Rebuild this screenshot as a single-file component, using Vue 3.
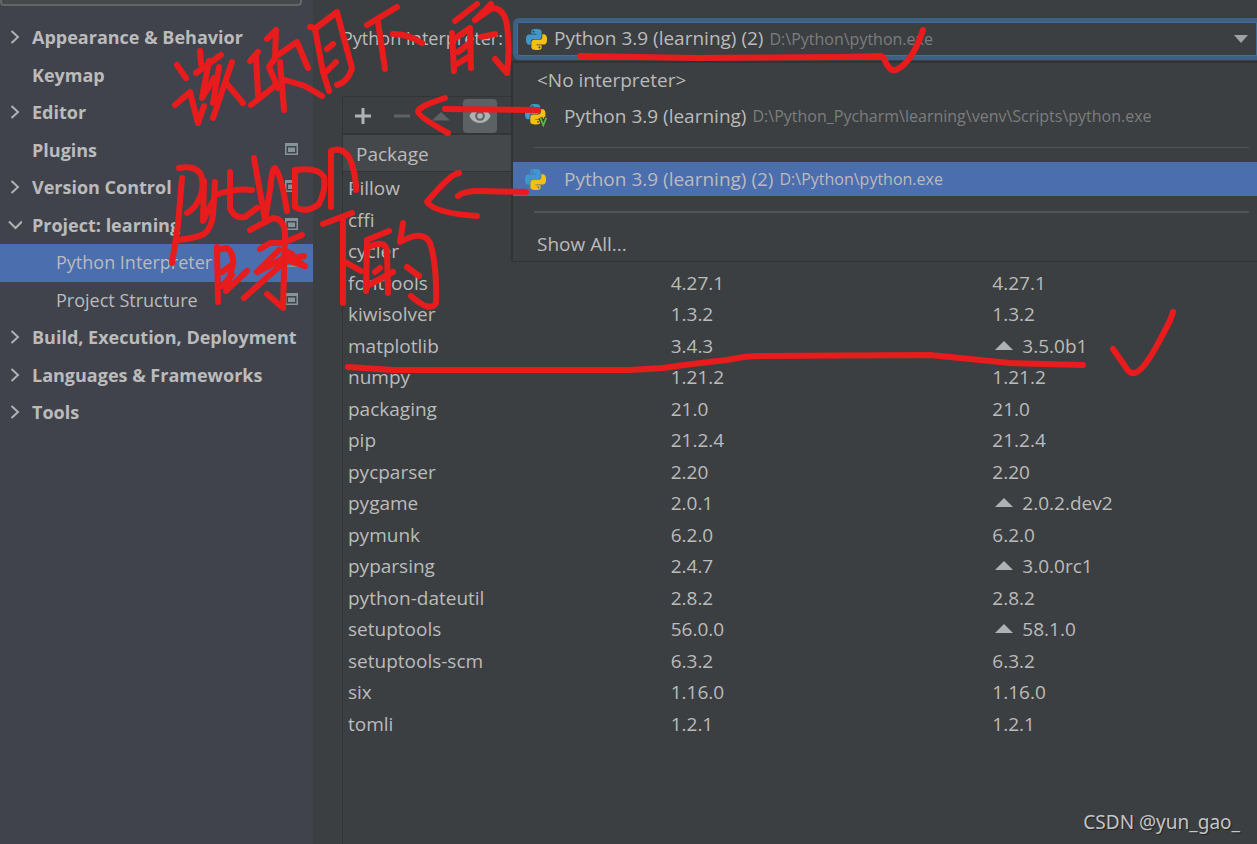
<script setup>
import { ref } from 'vue'

const query = ref('')
const interpreter = ref('Python 3.9 (learning) (2)')

const sections = [
  { name: 'Appearance & Behavior', arrow: 'right' },
  { name: 'Keymap' },
  { name: 'Editor', arrow: 'right' },
  { name: 'Plugins', badge: true },
  { name: 'Version Control', arrow: 'right', badge: true },
  { name: 'Project: learning', arrow: 'down', badge: true },
  { name: 'Python Interpreter', child: true, badge: true, active: true },
  { name: 'Project Structure', child: true, badge: true },
  { name: 'Build, Execution, Deployment', arrow: 'right' },
  { name: 'Languages & Frameworks', arrow: 'right' },
  { name: 'Tools', arrow: 'right' },
]

const packages = [
  ['Pillow', '', ''],
  ['cffi', '', ''],
  ['cycler', '', ''],
  ['fonttools', '4.27.1', '4.27.1'],
  ['kiwisolver', '1.3.2', '1.3.2'],
  ['matplotlib', '3.4.3', '3.5.0b1', true],
  ['numpy', '1.21.2', '1.21.2'],
  ['packaging', '21.0', '21.0'],
  ['pip', '21.2.4', '21.2.4'],
  ['pycparser', '2.20', '2.20'],
  ['pygame', '2.0.1', '2.0.2.dev2', true],
  ['pymunk', '6.2.0', '6.2.0'],
  ['pyparsing', '2.4.7', '3.0.0rc1', true],
  ['python-dateutil', '2.8.2', '2.8.2'],
  ['setuptools', '56.0.0', '58.1.0', true],
  ['setuptools-scm', '6.3.2', '6.3.2'],
  ['six', '1.16.0', '1.16.0'],
  ['tomli', '1.2.1', '1.2.1'],
]

const strokes = [
  // first note, upper line
  'M177 65L186 78', 'M175 105L190 92L194 108L198 123L204 106', 'M200 51L201 64', 'M196 73L221 55',
  'M209 61L202 98L214 78', 'M219 67L213 103', 'M232 62L213 118', 'M227 84L243 103',
  'M250 61L258 52', 'M256 56L258 95', 'M251 105L276 85', 'M267 39L276 30L275 58L269 67L278 88',
  'M278 55L297 42L308 68', 'M280 62L284 110', 'M285 80L305 86L322 96',
  'M310 27L316 28L337 12L343 35L352 68Q348 82 337 85', 'M315 29L323 72L329 91', 'M327 49L333 44', 'M324 74L336 62',
  'M367 25L397 7', 'M378 22L385 69', 'M393 34Q408 34 422 43',
  'M455 21L477 4', 'M452 33L454 71', 'M453 40L470 28L471 68', 'M458 52L470 43', 'M457 64L470 56',
  'M475 20L491 4', 'M475 20L492 8Q504 8 507 25Q510 50 507 73L495 59', 'M481 37L495 34',
  // second note, lower lines
  'M182 178L178 225L172 263', 'M179 168Q196 165 201 175Q204 184 201 195Q196 208 187 213',
  'M204 181L203 221L213 201', 'M215 182L213 215Q211 229 204 234Q196 238 178 240',
  'M230 172L230 208Q234 219 245 217L257 208', 'M215 195Q235 188 252 190',
  'M254 158L265 220L270 190Q272 168 275 168Q281 174 287 211',
  'M295 170L295 207Q306 214 319 204Q326 190 324 177Q318 167 295 170', 'M331 207L331 151Q343 146 350 159Q356 174 356 190',
  'M217 247L218 302', 'M217 250L227 248Q234 253 233 264L226 291', 'M222 272L233 264', 'M222 286L232 275', 'M227 290L247 271',
  'M250 230L273 218Q285 219 285 235L283 308L267 294', 'M260 249L270 243L283 243L302 235',
  'M257 272L279 250', 'M257 272L292 254', 'M244 298L281 265L290 257', 'M288 252L304 266', 'M304 256L286 260L305 266',
  'M323 224L352 213', 'M343 219L343 303', 'M345 262L361 271',
  'M367 240L366 291', 'M367 240L389 231', 'M367 248Q386 238 387 252L388 293', 'M375 272L380 268', 'M367 286L393 272',
  'M403 223L400 242Q423 229 430 243Q437 264 436 303Q430 313 411 296', 'M407 267L419 276',
  // arrows and ticks
  'M445 109L538 110', 'M445 98Q417 107 418 112Q419 117 448 133',
  'M458 196Q463 191 480 191L526 192', 'M459 173Q450 174 427 202Q434 213 477 216',
  'M1113 349L1125 366Q1130 376 1137 372Q1147 366 1163 334Q1171 320 1173 312',
]
const underlines = [
  'M580 56L697 58L840 57L880 56Q884 57 885 61Q890 72 896 70Q912 63 923 30',
  'M348 367L393 370L630 370L663 368Q690 364 727 360Q745 356 760 356L930 355L960 358L1010 363L1083 365',
]

const snakeTop =
  'M14.25.18l.9.2.73.26.59.3.45.32.34.34.25.34.16.33.1.3.04.26.02.2-.01.13V8.5l-.05.63-.13.55-.21.46-.26.38-.3.31-.33.25-.35.19-.35.14-.33.1-.3.07-.26.04-.21.02H8.77l-.69.05-.59.14-.5.22-.41.27-.33.32-.27.35-.2.36-.15.37-.1.35-.07.32-.04.27-.02.21v3.06H3.17l-.21-.03-.28-.07-.32-.12-.35-.18-.36-.26-.36-.36-.35-.46-.32-.59-.28-.73-.21-.88-.14-1.05-.05-1.23.06-1.22.16-1.04.24-.87.32-.71.36-.57.4-.44.42-.33.42-.24.4-.16.36-.1.32-.05.24-.01h.16l.06.01h8.16v-.83H6.18l-.01-2.75-.02-.37.05-.34.11-.31.17-.28.25-.26.31-.23.38-.2.44-.18.51-.15.58-.12.64-.1.71-.06.77-.04.84-.02 1.27.05zm-6.3 1.98l-.23.33-.08.41.08.41.23.34.33.22.41.09.41-.09.33-.22.23-.34.08-.41-.08-.41-.23-.33-.33-.22-.41-.09-.41.09z'
const snakeBottom =
  'M21.04 6.11l.28.06.32.12.35.18.36.27.36.35.35.47.32.59.28.73.21.88.14 1.04.05 1.23-.06 1.23-.16 1.04-.24.86-.32.71-.36.57-.4.45-.42.33-.42.24-.4.16-.36.09-.32.05-.24.02-.16-.01h-8.22v.82h5.84l.01 2.76.02.36-.05.34-.11.31-.17.29-.25.25-.31.24-.38.2-.44.17-.51.15-.58.13-.64.09-.71.07-.77.04-.84.01-1.27-.04-1.07-.14-.9-.2-.73-.25-.59-.3-.45-.33-.34-.34-.25-.34-.16-.33-.1-.3-.04-.25-.02-.2.01-.13v-5.34l.05-.64.13-.54.21-.46.26-.38.3-.32.33-.24.35-.2.35-.14.33-.1.3-.06.26-.04.21-.02.13-.01h5.84l.69-.05.59-.14.5-.21.41-.28.33-.32.27-.35.2-.36.15-.36.1-.35.07-.32.04-.28.02-.21V6.07h2.09l.14.01zm-6.47 14.25l-.23.33-.08.41.08.41.23.33.33.23.41.08.41-.08.33-.23.23-.33.08-.41-.08-.41-.23-.33-.33-.23-.41-.08-.41.08z'
</script>

<template>
  <div class="settings">
    <aside class="sidebar">
      <input v-model="query" class="search" type="search" aria-label="Search settings" />
      <nav>
        <ul class="tree">
          <li v-for="s in sections" :key="s.name">
            <button type="button" class="node" :class="{ child: s.child, active: s.active }">
              <span v-if="!s.child" class="twisty">
                <svg v-if="s.arrow" width="14" height="14" viewBox="0 0 14 14" aria-hidden="true">
                  <path :d="s.arrow === 'right' ? 'M3.5 1L10 7L3.5 13' : 'M1 3.5L7.5 10L14 3.5'" />
                </svg>
              </span>
              <span class="name">{{ s.name }}</span>
              <svg v-if="s.badge" class="badge" width="13" height="14" viewBox="0 0 13 14" aria-hidden="true">
                <path d="M0 0h13v12H0zM1.500 3v7.500h10V3z" fill-rule="evenodd" />
                <path d="M3 4.500h7v4.500H3z" />
              </svg>
            </button>
          </li>
        </ul>
      </nav>
    </aside>

    <main class="content">
      <div class="field">
        <label for="interpreter">Python Interpreter:</label>
        <div class="combo-area">
          <div class="combo">
            <svg class="python" width="21" height="21" viewBox="0 0 24 24" aria-hidden="true">
              <path class="blue" :d="snakeTop" /><path class="yellow" :d="snakeBottom" />
            </svg>
            <select id="interpreter" v-model="interpreter">
              <option>Python 3.9 (learning) (2)</option>
            </select>
            <span class="path">D:\Python\python.exe</span>
            <svg class="caret" width="14" height="8" viewBox="0 0 14 8" aria-hidden="true"><path d="M0 0h14L7 8z" /></svg>
          </div>
          <div class="popup" role="listbox" aria-label="Interpreters">
            <button type="button" role="option" class="option plain none">&lt;No interpreter&gt;</button>
            <button type="button" role="option" class="option">
              <span class="glyph">
                <svg width="23" height="23" viewBox="0 0 27 27" aria-hidden="true">
                  <path class="blue" :d="snakeTop" /><path class="yellow" :d="snakeBottom" />
                  <path class="venv-edge" d="M18 16L21.500 25L25 16" />
                  <path class="venv" d="M18 16L21.500 25L25 16" />
                </svg>
              </span>
              <span>Python 3.9 (learning)</span>
              <span class="path">D:\Python_Pycharm\learning\venv\Scripts\python.exe</span>
            </button>
            <hr />
            <button type="button" role="option" aria-selected="true" class="option chosen">
              <span class="glyph">
                <svg width="21" height="21" viewBox="0 0 24 24" aria-hidden="true">
                  <path class="blue" :d="snakeTop" /><path class="yellow" :d="snakeBottom" />
                </svg>
              </span>
              <span>Python 3.9 (learning) (2)</span>
              <span class="path">D:\Python\python.exe</span>
            </button>
            <hr class="thick" />
            <button type="button" role="option" class="option plain">Show All...</button>
          </div>
        </div>
      </div>

      <section class="packages">
        <div class="toolbar">
          <button type="button" aria-label="Install">
            <svg width="16" height="16" viewBox="0 0 16 16"><path class="lit" d="M6.500 0h3v6.500H16v3H9.500V16h-3V9.500H0v-3h6.500z" /></svg>
          </button>
          <button type="button" aria-label="Uninstall">
            <svg width="16" height="16" viewBox="0 0 16 16"><path class="dim" d="M0 6.500h16v3H0z" /></svg>
          </button>
          <button type="button" aria-label="Upgrade">
            <svg width="18" height="16" viewBox="0 0 18 16"><path class="dim" d="M0 12.500h18L9 4z" /></svg>
          </button>
          <button type="button" class="on" aria-label="Show early releases">
            <svg width="22" height="16" viewBox="0 0 22 16">
              <path class="lit" fill-rule="evenodd" d="M11 1C6 1 2 4 .5 8C2 12 6 15 11 15s9-3 10.500-7C20 4 16 1 11 1zM11 3.200a4.800 4.800 0 1 1 0 9.600a4.800 4.800 0 1 1 0-9.600z" />
              <circle class="lit" cx="11" cy="8" r="2.800" />
            </svg>
          </button>
        </div>
        <table>
          <thead>
            <tr><th colspan="3" scope="col">Package</th></tr>
          </thead>
          <tbody>
            <tr v-for="p in packages" :key="p[0]">
              <td>{{ p[0] }}</td>
              <td>{{ p[1] }}</td>
              <td>
                <svg v-if="p[3]" class="up" width="18" height="9" viewBox="0 0 18 9" aria-hidden="true"><path d="M0 9h18L9 0z" /></svg>{{ p[2] }}
              </td>
            </tr>
          </tbody>
        </table>
      </section>
    </main>

    <svg class="ink" width="1257" height="844" viewBox="0 0 1257 844" aria-hidden="true">
      <path v-for="d in strokes" :key="d" :d="d" />
      <path v-for="d in underlines" :key="d" :d="d" />
    </svg>
    <p class="watermark">CSDN @yun_gao_</p>
  </div>
</template>

<style>
body {
  margin: 0;
  background: #3c3f41;
}
</style>

<style scoped>
.settings {
  position: relative;
  display: flex;
  min-height: 100vh;
  overflow: hidden;
  background: #3c3f41;
  color: #bbb;
  font: 19px/24px "Open Sans", "Noto Sans", sans-serif;
}
button,
select,
input {
  margin: 0;
  padding: 0;
  border: 0;
  background: none;
  color: inherit;
  font: inherit;
  text-align: left;
}
.sidebar {
  flex: 0 0 313px;
  min-width: 0;
  background: #40434c;
  font-size: 18px;
}
.search {
  display: block;
  box-sizing: border-box;
  width: 302px;
  height: 6px;
  border: 2px solid #646666;
  border-top: 0;
  border-radius: 0 0 4px 4px;
  background: #45494a;
}
.tree {
  margin: 0;
  padding: 13px 0 0;
  list-style: none;
}
.node {
  display: flex;
  align-items: center;
  box-sizing: border-box;
  width: 100%;
  height: 37px;
  padding: 0 15px 2px 8px;
  font-weight: 700;
}
li:nth-child(odd) .node {
  height: 38px;
}
.node.child {
  padding-left: 56px;
  font-weight: 400;
}
.node.active {
  background: #4b6eaf;
}
.twisty {
  display: flex;
  flex: none;
  width: 24px;
}
.twisty path {
  fill: none;
  stroke: #afb1b3;
  stroke-width: 2;
}
.name {
  flex: 1;
  white-space: nowrap;
}
.badge {
  flex: none;
  fill: #87939a;
}
.content {
  display: flex;
  flex: 1;
  flex-direction: column;
  min-width: 0;
  padding-left: 29px;
}
.field {
  display: flex;
  align-items: center;
  height: 42px;
  margin: 18px 0 36px;
}
.field label {
  box-sizing: border-box;
  flex: 0 0 171px;
  padding-bottom: 2px;
  font-size: 18px;
  white-space: nowrap;
}
.combo-area {
  position: relative;
  flex: 1;
  min-width: 0;
}
.combo {
  display: flex;
  align-items: center;
  box-sizing: border-box;
  height: 42px;
  padding: 0 9px;
  border: 4px solid #3d6185;
  border-right-width: 0;
  border-radius: 6px 0 0 6px;
  box-shadow: inset 0 0 0 1px #466d94;
}
.python {
  flex: none;
}
.blue {
  fill: #3f97cc;
}
.yellow {
  fill: #f2c010;
}
.venv-edge,
.venv {
  fill: none;
  stroke: #3c3f41;
  stroke-width: 5;
}
.venv {
  stroke: #62b543;
  stroke-width: 2;
}
.combo select {
  box-sizing: border-box;
  flex: none;
  height: 34px;
  margin-left: 7px;
  padding-bottom: 2px;
  appearance: none;
  field-sizing: content;
  outline: 0;
}
.path {
  margin-left: 6px;
  color: #7b7d7e;
  font-size: 16px;
  white-space: nowrap;
}
.caret {
  margin-left: auto;
  fill: #9fa2a4;
}
.popup {
  position: absolute;
  z-index: 1;
  top: 43px;
  right: 0;
  left: -2px;
  display: flex;
  flex-direction: column;
  border: solid #313335;
  border-width: 2px 0 1px 2px;
  background: #3c3f41;
}
.option {
  display: flex;
  align-items: center;
  box-sizing: border-box;
  height: 34px;
  padding-left: 12px;
  white-space: nowrap;
}
.option:nth-child(-n + 2) {
  height: 35px;
}
.option.none {
  padding-bottom: 2px;
}
.option.plain {
  padding-left: 24px;
}
.glyph {
  display: flex;
  width: 39px;
}
.chosen {
  background: #4b6eaf;
}
.chosen .path {
  color: #bbb;
}
.popup hr {
  width: auto;
  height: 1px;
  margin: 14px 8px 14px 21px;
  border: 0;
  background: #515355;
}
.popup hr.thick {
  height: 2px;
  margin-top: 15px;
}
.packages {
  flex: 1;
  border: solid #323436;
  border-width: 1px 0 0 1px;
}
.toolbar {
  display: flex;
  align-items: center;
  gap: 5px;
  height: 34px;
  padding: 2px 0 0 3px;
  border-bottom: 2px solid #323436;
}
.toolbar button {
  display: flex;
  align-items: center;
  justify-content: center;
  width: 34px;
  height: 34px;
  border-radius: 4px;
}
.toolbar .on {
  background: #5c6164;
}
.lit {
  fill: #afb1b3;
}
.dim {
  fill: #5f6162;
}
table {
  width: 100%;
  border-collapse: collapse;
  table-layout: fixed;
}
th {
  height: 34px;
  padding: 2px 0 0 13px;
  border-bottom: 1px solid #323436;
  background: #45484a;
  font-weight: 400;
  text-align: left;
}
td {
  height: 31px;
  padding: 0 0 0 5px;
  line-height: 24px;
  white-space: nowrap;
}
tr:nth-child(odd) td {
  height: 32px;
}
td:nth-child(2) {
  padding-left: 23px;
}
td:nth-child(3) {
  padding-left: 40px;
}
.up {
  margin: 0 9px 3px 3px;
  fill: #afb1b3;
}
.ink {
  position: absolute;
  z-index: 2;
  top: 0;
  left: 0;
  fill: none;
  stroke: #e81c1c;
  stroke-width: 6;
  stroke-linecap: round;
  stroke-linejoin: round;
  pointer-events: none;
}
.watermark {
  position: absolute;
  right: 17px;
  bottom: 8px;
  margin: 0;
  color: #c4c5c6;
  font: 19px/28px "Noto Sans", sans-serif;
  text-shadow: 1px 1px 1px #222;
}
</style>
